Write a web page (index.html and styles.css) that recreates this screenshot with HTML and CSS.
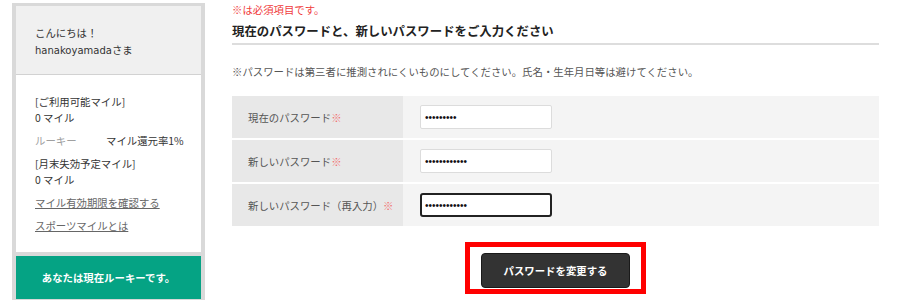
FILE: index.html
```html
<!DOCTYPE html>
<html lang="ja">
<head>
  <meta charset="UTF-8" />
  <meta name="viewport" content="width=device-width, initial-scale=1.0"/>
  <title>パスワード変更</title>
  <link rel="stylesheet" href="styles.css">
</head>
<body>

  <div id="page">
    <aside id="sidebar">
      <div class="profile">
        <div class="profile-head">
          <p>こんにちは！</p>
          <p><span class="user-name">hanakoyamada</span>さま</p>
        </div>
        <div class="profile-body">
          <div class="group">
            <p>[ご利用可能マイル]</p>
            <p>0 マイル</p>
          </div>
          <div class="group rank-row">
            <span class="rank">ルーキー</span>
            <span>マイル還元率1%</span>
          </div>
          <div class="group">
            <p>[月末失効予定マイル]</p>
            <p>0 マイル</p>
          </div>
          <div class="group"><a href="#">マイル有効期限を確認する</a></div>
          <div class="group"><a href="#">スポーツマイルとは</a></div>
        </div>
      </div>
      <div class="status">あなたは現在ルーキーです。</div>
    </aside>

    <main id="content">
      <p class="required">※は必須項目です。</p>
      <h2 class="heading">現在のパスワードと、新しいパスワードをご入力ください</h2>
      <p class="note">※パスワードは第三者に推測されにくいものにしてください。氏名・生年月日等は避けてください。</p>

      <form class="form-table" onsubmit="return false">
        <div class="form-row">
          <label class="form-label" for="current">現在のパスワード<span class="mark">※</span></label>
          <div class="form-value"><input type="password" id="current" value="aaaaaaaaa"></div>
        </div>
        <div class="form-row">
          <label class="form-label" for="newpass">新しいパスワード<span class="mark">※</span></label>
          <div class="form-value"><input type="password" id="newpass" value="aaaaaaaaaaaa"></div>
        </div>
        <div class="form-row">
          <label class="form-label" for="confirm">新しいパスワード（再入力）<span class="mark">※</span></label>
          <div class="form-value"><input type="password" id="confirm" class="is-focus" value="aaaaaaaaaaaa"></div>
        </div>

        <div class="submit-area">
          <div class="highlight">
            <button type="submit">パスワードを変更する</button>
          </div>
        </div>
      </form>
    </main>
  </div>

</body>
</html>
```

FILE: styles.css
```css
body { margin: 0; font-family: "Noto Sans CJK JP", "Noto Sans", sans-serif; font-size: 10.4px; color: #333; background: #fff; }
p { margin: 0; }

#page { display: flex; align-items: flex-start; }

/* sidebar */
#sidebar { flex: none; margin: 3px 0 0 12px; width: 185px; padding: 3px 4px 4px; background: #d9d9d9; display: flex; flex-direction: column; gap: 4px; }
.profile-head { background: #f0f0f0; padding: 18px 19px 15px; line-height: 17px; border-bottom: 1px solid #d2d2d2; }
.user-name { font-family: "DejaVu Sans", "Noto Sans CJK JP", sans-serif; font-size: 10px; }
.profile-body { background: #fff; padding: 19px 8px 18px 19px; line-height: 16px; white-space: nowrap; }
.profile-body .group + .group { margin-top: 7px; }
.rank-row { display: flex; }
.rank { width: 71px; color: #a0a0a0; }
.profile-body a { color: #666; text-decoration: underline; }
.status { background: #05a384; color: #fff; font-weight: bold; text-align: center; height: 43px; line-height: 43px; }

/* main */
#content { flex: none; margin-left: 27px; width: 647px; }
.required { color: #f03c3c; line-height: 16px; margin-top: 2px; }
.heading { font-size: 12.4px; font-weight: bold; color: #222; line-height: 18px; margin: 4px 0 0; padding-bottom: 3px; border-bottom: 2px solid #ddd; }
.note { color: #555; line-height: 16px; margin-top: 19px; }

.form-table { margin: 16px 0 0; }
.form-row { display: grid; grid-template-columns: 171px 1fr; height: 42px; }
.form-row + .form-row { margin-top: 2px; }
.form-label { background: #e8e8e8; color: #555; padding-left: 16px; display: flex; align-items: center; }
.mark { color: #f26d6d; }
.form-value { background: #f4f4f4; padding-left: 17px; display: flex; align-items: center; }
.form-value input { box-sizing: border-box; width: 132px; height: 24px; border: 1px solid #dcdcdc; border-radius: 2px; background: #fff; padding: 0 4px; font-family: "Liberation Sans", sans-serif; font-size: 10px; color: #111; outline: none; }
.form-value input.is-focus { border: 2px solid #222; border-radius: 3px; padding: 0 3px; }

.submit-area { text-align: center; margin-top: 16px; }
.highlight { display: inline-block; border: 5px solid #f00; padding: 6px 11px 1px 11px; }
.highlight button { width: 149px; height: 35px; background: #333; color: #fff; border: 1px solid #1a1a1a; border-radius: 4px; font-family: inherit; font-size: 10.4px; font-weight: bold; cursor: pointer; }
```
